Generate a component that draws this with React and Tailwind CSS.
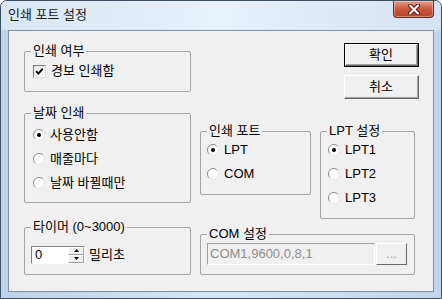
import React from "react";

const Radio = ({ checked }) => (
  <svg width="12" height="12" viewBox="0 0 12 12" className="shrink-0">
    <circle cx="6" cy="6" r="5.5" fill="#ffffff" />
    <path d="M9.9 2.1 A5.5 5.5 0 0 0 2.1 9.9" stroke="#8a8a8a" fill="none" />
    <path d="M9.9 2.1 A5.5 5.5 0 0 1 2.1 9.9" stroke="#e2e2e2" fill="none" />
    {checked && <circle cx="6" cy="6" r="2" fill="#000000" />}
  </svg>
);

const RadioRow = ({ label, checked }) => (
  <div className="flex h-[24px] items-center gap-[5px]">
    <Radio checked={checked} />
    <span>{label}</span>
  </div>
);

const Group = ({ title, className, children }) => (
  <fieldset
    className={
      "rounded-[2px] border border-[#a5a5a5] " + (className || "")
    }
  >
    <legend className="ml-[6px] h-[14px] px-[2px] leading-[14px]">
      {title}
    </legend>
    {children}
  </fieldset>
);

const DialogButton = ({ label, isDefault }) => (
  <div
    className={
      "h-[24px] w-[75px] " +
      (isDefault ? "border border-black" : "")
    }
  >
    <div className="flex h-full w-full items-center justify-center border border-b-[#696969] border-l-white border-r-[#696969] border-t-white bg-[#f0f0f0]">
      <div className="flex h-full w-full items-center justify-center border-b border-r border-b-[#a0a0a0] border-r-[#a0a0a0]">
        {label}
      </div>
    </div>
  </div>
);

const CloseButton = () => (
  <div className="flex h-[17px] w-[41px] items-center justify-center rounded-b-[4px] border border-t-0 border-[#6b2a20] bg-linear-to-b from-[#e6a08f] via-[#c9553c] to-[#b8432a] shadow-[inset_0_0_0_1px_rgba(255,255,255,0.35)]">
    <svg width="14" height="11" viewBox="0 0 14 11">
      <path d="M3 1.5 L11 9.5 M11 1.5 L3 9.5" stroke="#5b1c12" strokeWidth="4" strokeLinecap="round" />
      <path d="M3 1.5 L11 9.5 M11 1.5 L3 9.5" stroke="#ffffff" strokeWidth="2" strokeLinecap="round" />
    </svg>
  </div>
);

export default function App() {
  return (
    <div className="flex h-[299px] w-[442px] flex-col overflow-hidden rounded-t-[7px] border border-[#3d4f63] bg-linear-to-r from-[#bcd4ec] via-[#d6e5f4] to-[#bfd6ee] font-[family-name:'Liberation_Sans','Noto_Sans_CJK_KR',sans-serif] text-[13px] text-black">
      <div className="flex h-[29px] shrink-0 items-start justify-between bg-linear-to-r from-[#d9e6f3] via-[#e9f1fa] to-[#d3e3f3] pl-[7px] pr-[7px]">
        <span className="mt-[6px] text-[13px] leading-[15px] text-[#1a1a1a]">
          인쇄 포트 설정
        </span>
        <CloseButton />
      </div>

      <div className="mx-[7px] h-[262px] shrink-0 border border-[#7d91a8] bg-[#f0f0f0]">
        <div className="flex pl-[15px] pt-[12px]">
          {/* left column */}
          <div className="flex w-[167px] flex-col">
            <Group title="인쇄 여부" className="mt-[1px] h-[48px]">
              <div className="mt-[6px] flex h-[14px] items-center gap-[5px] pl-[8px]">
                <div className="flex h-[13px] w-[13px] items-center justify-center border border-b-[#dadada] border-l-[#7f7f7f] border-r-[#dadada] border-t-[#7f7f7f] bg-linear-to-br from-[#e8e8e8] to-white">
                  <svg width="9" height="9" viewBox="0 0 9 9">
                    <polyline points="1.2,4.2 3.4,6.6 7.8,1.6" stroke="#000" strokeWidth="1.8" fill="none" />
                  </svg>
                </div>
                <span>경보 인쇄함</span>
              </div>
            </Group>

            <Group title="날짜 인쇄" className="mt-[14px] h-[97px]">
              <div className="flex flex-col pl-[8px] pt-[3px]">
                <RadioRow label="사용안함" checked />
                <RadioRow label="매줄마다" />
                <RadioRow label="날짜 바뀔때만" />
              </div>
            </Group>

            <Group title="타이머 (0~3000)" className="mt-[17px] h-[55px]">
              <div className="flex items-center pl-[6px] pt-[11px]">
                <div className="flex h-[18px] w-[54px] border border-b-white border-l-[#808080] border-r-white border-t-[#808080] bg-white">
                  <span className="flex-1 pl-[3px] leading-[16px]">0</span>
                  <div className="flex w-[16px] flex-col">
                    <div className="flex h-[8px] items-center justify-center border border-b-[#a0a0a0] border-l-white border-r-[#a0a0a0] border-t-white bg-[#f0f0f0]">
                      <svg width="5" height="3" viewBox="0 0 5 3">
                        <path d="M0 3 L2.5 0 L5 3 Z" fill="#000" />
                      </svg>
                    </div>
                    <div className="flex h-[8px] items-center justify-center border border-b-[#a0a0a0] border-l-white border-r-[#a0a0a0] border-t-white bg-[#f0f0f0]">
                      <svg width="5" height="3" viewBox="0 0 5 3">
                        <path d="M0 0 L5 0 L2.5 3 Z" fill="#000" />
                      </svg>
                    </div>
                  </div>
                </div>
                <span className="ml-[4px]">밀리초</span>
              </div>
            </Group>
          </div>

          {/* right area */}
          <div className="ml-[9px] flex flex-col">
            <div className="ml-[144px] flex flex-col gap-[8px]">
              <DialogButton label="확인" isDefault />
              <DialogButton label="취소" />
            </div>

            <div className="mt-[25px] flex items-start gap-[9px]">
              <Group title="인쇄 포트" className="h-[71px] w-[111px]">
                <div className="flex flex-col pl-[6px]">
                  <RadioRow label="LPT" checked />
                  <RadioRow label="COM" />
                </div>
              </Group>
              <Group title="LPT 설정" className="h-[95px] w-[95px]">
                <div className="flex flex-col pl-[7px]">
                  <RadioRow label="LPT1" checked />
                  <RadioRow label="LPT2" />
                  <RadioRow label="LPT3" />
                </div>
              </Group>
            </div>

            <Group title="COM 설정" className="mt-[8px] h-[48px] w-[215px]">
              <div className="flex pl-[6px] pt-[2px]">
                <div className="flex h-[22px] w-[168px] items-center border border-b-white border-l-[#a0a0a0] border-r-white border-t-[#a0a0a0] bg-[#f0f0f0] pl-[2px] text-[#8d8d8d]">
                  COM1,9600,0,8,1
                </div>
                <div className="ml-[1px] flex h-[22px] w-[31px] items-center justify-center border border-b-[#696969] border-l-white border-r-[#696969] border-t-white bg-[#f0f0f0] text-[#a0a0a0]">
                  ...
                </div>
              </div>
            </Group>
          </div>
        </div>
      </div>
    </div>
  );
}
